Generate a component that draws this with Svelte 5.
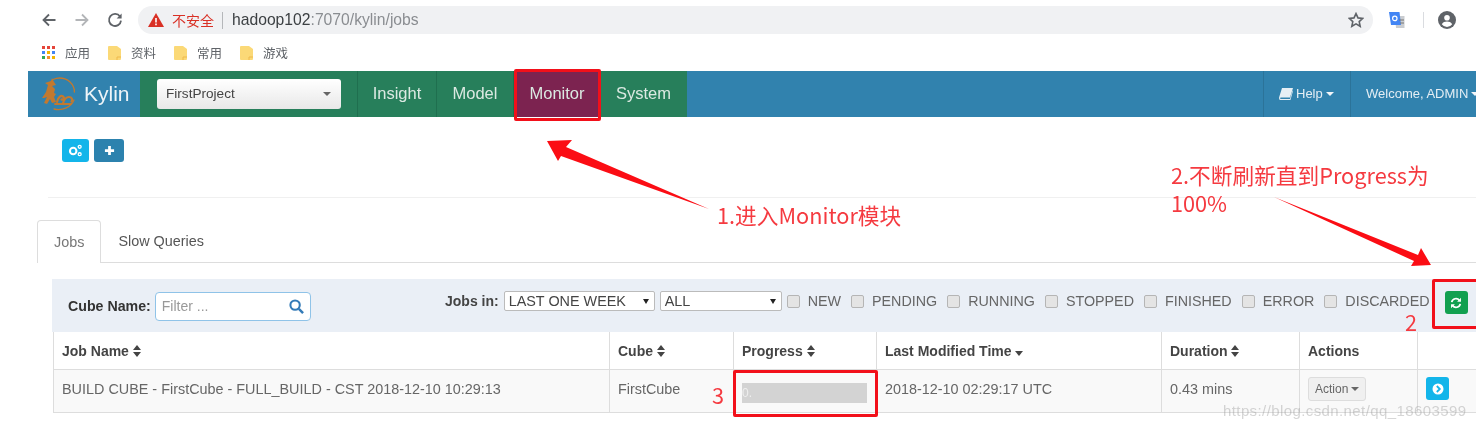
<script>
	const bookmarks = ['资料', '常用', '游戏'];
	const appDots = ['#e5453a', '#e5453a', '#e5453a', '#4285f4', '#f4b400', '#4285f4', '#34a853', '#f4902b', '#f4b400'];
	const navItems = ['Insight', 'Model', 'Monitor', 'System'];
	const statuses = ['NEW', 'PENDING', 'RUNNING', 'STOPPED', 'FINISHED', 'ERROR', 'DISCARDED'];
	const columns = [
		{ label: 'Job Name', width: 556, sort: 'both' },
		{ label: 'Cube', width: 124, sort: 'both' },
		{ label: 'Progress', width: 143, sort: 'both' },
		{ label: 'Last Modified Time', width: 285, sort: 'down' },
		{ label: 'Duration', width: 138, sort: 'both' },
		{ label: 'Actions', width: 118, sort: '' },
		{ label: '', width: 59, sort: '' }
	];
</script>

<div class="screen">
	<div class="browser">
		<div class="url-row">
			<svg class="tool" viewBox="0 0 16 16" width="16" height="16"><path d="M14.5 8H3M8 2.5 2.5 8 8 13.5" fill="none" stroke="#5f6368" stroke-width="1.8" /></svg>
			<svg class="tool" viewBox="0 0 16 16" width="16" height="16"><path d="M1.5 8H13M8 2.5 13.5 8 8 13.5" fill="none" stroke="#b3b5b8" stroke-width="1.8" /></svg>
			<svg class="tool" viewBox="0 0 16 16" width="16" height="16"><path d="M13 4.6A6 6 0 1 0 14 8.6" fill="none" stroke="#5f6368" stroke-width="1.8" /><path d="M14.6 1.6v5h-5z" fill="#5f6368" /></svg>
			<div class="omnibox">
				<svg viewBox="0 0 16 14" width="16" height="14"><path d="M8 0 16 14H0z" fill="#d93025" /><path d="M7.2 5h1.6v4.6H7.2zM7.2 10.6h1.6v1.6H7.2z" fill="#fff" /></svg>
				<span class="insecure">不安全</span>
				<span class="divider"></span>
				<span class="host">hadoop102</span><span class="path">:7070/kylin/jobs</span>
				<svg class="star" viewBox="0 0 16 16" width="16" height="16"><path d="m8 1.6 2 4.3 4.7.5-3.5 3.2 1 4.7L8 11.9l-4.2 2.4 1-4.7-3.5-3.2 4.7-.5z" fill="none" stroke="#5f6368" stroke-width="1.6" /></svg>
			</div>
			<svg class="translate" viewBox="0 0 18 18" width="18" height="18"><path d="M7 5h9.5v12H8z" fill="#c9ccd0" /><path d="M1 1h10.5l1.500 13H3z" fill="#4285f4" /><circle cx="6.800" cy="7.400" r="2.200" fill="none" stroke="#fff" stroke-width="1.200" /><path d="M11 9h5M12 12h4" stroke="#777" stroke-width="1" /></svg>
			<span class="ext-divider"></span>
			<svg class="account" viewBox="0 0 18 18" width="18" height="18"><circle cx="9" cy="9" r="9" fill="#5f6368" /><circle cx="9" cy="6.700" r="2.800" fill="#fff" /><path d="M3.800 13.200c1-2 3.200-2.700 5.200-2.700s4.200.7 5.200 2.700A6.800 6.800 0 0 1 9 16a6.800 6.800 0 0 1-5.200-2.800" fill="#fff" /></svg>
		</div>
		<div class="bookmark-row">
			<div class="bookmark">
				<span class="apps">
					{#each appDots as color}
						<i style:background={color}></i>
					{/each}
				</span>
				<span>应用</span>
			</div>
			{#each bookmarks as name}
				<div class="bookmark">
					<svg viewBox="0 0 13 14" width="13" height="14"><path d="M0 1a1 1 0 0 1 1-1h8l4 3v10a1 1 0 0 1-1 1H1a1 1 0 0 1-1-1z" fill="#fbd977" /><path d="M9 14v-3h4" fill="none" stroke="#eeb94c" /></svg>
					<span>{name}</span>
				</div>
			{/each}
		</div>
	</div>

	<div class="page">
		<nav class="navbar">
			<div class="brand">
				<svg viewBox="0 0 36 36" width="36" height="36">
					<g fill="none" stroke="#c2792f" stroke-linecap="round">
						<path d="M13 3.500C21 0 30 3 33.500 11c1 2.500 1 4 .8 5" stroke-width="1.300" />
						<path d="M34 24c-3 7-11 11-20 9" stroke-width="1.300" />
						<path d="M17 26c1-5 4-7 6-5.500 2 1.500 0 4-1.500 3M23 27c1-3 3-6 6-6 3 0 4 3 2.500 4.500" stroke-width="2.200" />
						<path d="M15 28h16" stroke-width="1.800" />
					</g>
					<path d="M2 22 6 16 8 9l-3-2 6-2 1-3 2 4 2 3-4 1 3 3-1 4 2 1-2 3 2 5-4 1-2-4-3 5-3-1 3-6-3 1z" fill="#c2792f" />
				</svg>
				<span>Kylin</span>
			</div>
			<div class="green">
				<div class="project-slot">
					<div class="project">
						<span>FirstProject</span>
						<i class="caret dark"></i>
					</div>
				</div>
				{#each navItems as item}
					<a href="#top" class="nav-link" class:active={item === 'Monitor'}>{item}</a>
				{/each}
			</div>
			<div class="nav-right">
				<a href="#top" class="help">
					<svg viewBox="0 0 14 12" width="14" height="12"><path d="M3 0h11l-3 9.500H1.500a1.200 1.200 0 0 0 0 1.500H11l2.500-8.500.5.600-2.700 9.400H1.500C.3 12-.3 10.500.2 9z" fill="#e6eff5" /></svg>
					Help <i class="caret light"></i>
				</a>
				<a href="#top" class="welcome">Welcome, ADMIN <i class="caret light"></i></a>
			</div>
		</nav>

		<div class="actions-bar">
			<button class="square info" aria-label="settings">
				<svg viewBox="0 0 16 14" width="15" height="13">
					<circle cx="5.500" cy="7.500" r="3.500" fill="none" stroke="#fff" stroke-width="2.200" />
					<circle cx="12.500" cy="3" r="1.600" fill="none" stroke="#fff" stroke-width="1.400" />
					<circle cx="12.500" cy="11" r="1.600" fill="none" stroke="#fff" stroke-width="1.400" />
				</svg>
			</button>
			<button class="square primary" aria-label="add">
				<svg viewBox="0 0 12 12" width="11" height="11"><path d="M6 1v10M1 6h10" stroke="#fff" stroke-width="3" /></svg>
			</button>
		</div>
		<div class="rule"></div>

		<div class="tabs">
			<span class="tab on">Jobs</span>
			<span class="tab">Slow Queries</span>
		</div>

		<section class="jobs">
			<div class="filters">
				<div class="cube-filter">
					<b>Cube Name:</b>
					<div class="search">
						<span>Filter ...</span>
						<svg viewBox="0 0 16 16" width="15" height="15"><circle cx="6.500" cy="6.500" r="5" fill="none" stroke="#337ab7" stroke-width="2.200" /><path d="m10.500 10.500 4.500 4.500" stroke="#337ab7" stroke-width="2.600" /></svg>
					</div>
				</div>
				<div class="job-filter">
					<b>Jobs in:</b>
					<div class="select week">LAST ONE WEEK<i class="caret black"></i></div>
					<div class="select all">ALL<i class="caret black"></i></div>
					{#each statuses as status}
						<span class="status"><i class="check"></i>{status}</span>
					{/each}
				</div>
				<button class="square success refresh" aria-label="refresh">
					<svg viewBox="0 0 14 14" width="12" height="12"><path d="M2 6a5 5 0 0 1 9-2M12 8a5 5 0 0 1-9 2" fill="none" stroke="#fff" stroke-width="2" /><path d="M12.800 1v4.500H8.300zM1.200 13V8.500h4.500z" fill="#fff" /></svg>
				</button>
			</div>

			<table>
				<colgroup>
					{#each columns as col}
						<col style:width="{col.width}px" />
					{/each}
				</colgroup>
				<thead>
					<tr>
						{#each columns as col}
							<th>
								{col.label}
								{#if col.sort === 'both'}
									<svg class="sort" viewBox="0 0 8 12" width="8" height="12"><path d="M4 0l4 5H0zM4 12 0 7h8z" fill="#444" /></svg>
								{:else if col.sort === 'down'}
									<svg class="sort" viewBox="0 0 8 12" width="8" height="12"><path d="M4 11 0 6h8z" fill="#444" /></svg>
								{/if}
							</th>
						{/each}
					</tr>
				</thead>
				<tbody>
					<tr>
						<td>BUILD CUBE - FirstCube - FULL_BUILD - CST 2018-12-10 10:29:13</td>
						<td>FirstCube</td>
						<td><div class="progress">0.</div></td>
						<td>2018-12-10 02:29:17 UTC</td>
						<td>0.43 mins</td>
						<td><span class="action">Action <i class="caret dark"></i></span></td>
						<td>
							<button class="square info go" aria-label="details">
								<svg viewBox="0 0 12 12" width="12" height="12"><circle cx="6" cy="6" r="5.500" fill="#fff" /><path d="m4.800 3 3 3-3 3" fill="none" stroke="#13b5ea" stroke-width="1.800" /></svg>
							</button>
						</td>
					</tr>
				</tbody>
			</table>
		</section>
	</div>

	<!-- annotations pasted over the screenshot -->
	<svg class="arrows" viewBox="0 0 1476 430" width="1476" height="430">
		<path d="M547 141 572 140 566 147 709 209 561 156 558 161z" fill="#fb0d14" />
		<path d="M1274 197 1418 255 1421 248 1431 265 1411 266 1414 261z" fill="#fb0d14" />
	</svg>
	<span class="mark mark-monitor"></span>
	<span class="mark mark-refresh"></span>
	<span class="mark mark-progress"></span>
	<span class="note note-1">1.进入Monitor模块</span>
	<span class="note note-2">2.不断刷新直到Progress为<br />100%</span>
	<span class="note num-2">2</span>
	<span class="note num-3">3</span>
	<span class="watermark">https://blog.csdn.net/qq_18603599</span>
</div>

<style>
	:global(body) {
		margin: 0;
		background: #fff;
	}

	.screen {
		position: relative;
		width: 1476px;
		height: 430px;
		overflow: hidden;
		font-family: 'Liberation Sans', 'Noto Sans CJK SC', sans-serif;
		font-size: 14.4px;
		color: #555;
		background: #fff;
		filter: blur(0.35px);
	}

	/* browser chrome */
	.browser {
		height: 71px;
	}

	.url-row {
		display: flex;
		align-items: center;
		height: 28px;
		padding: 6px 0 0 41px;
	}

	.tool {
		margin-right: 17px;
	}

	.tool:nth-child(3) {
		margin-right: 15px;
	}

	.omnibox {
		display: flex;
		align-items: center;
		width: 1225px;
		height: 28px;
		padding-left: 10px;
		border-radius: 14px;
		background: #f0f1f3;
		font-size: 15.7px;
	}

	.insecure {
		margin-left: 8px;
		color: #d93025;
		font-size: 14px;
	}

	.divider {
		width: 1px;
		height: 17px;
		margin: 0 9px 0 8px;
		background: #b5b7ba;
	}

	.host {
		color: #3c4043;
	}

	.path {
		color: #8a8d91;
	}

	.star {
		margin-left: auto;
		margin-right: 9px;
	}

	.translate {
		margin-left: 15px;
	}

	.ext-divider {
		width: 1px;
		height: 16px;
		margin: 0 14px 0 17px;
		background: #dadce0;
	}

	.bookmark-row {
		display: flex;
		align-items: center;
		height: 37px;
		padding-left: 42px;
	}

	.bookmark {
		display: flex;
		align-items: center;
		gap: 10px;
		width: 66px;
		font-size: 12.5px;
		color: #5f6368;
	}

	.apps {
		display: grid;
		grid-template-columns: repeat(3, 3px);
		gap: 2px;
	}

	.apps i {
		height: 3px;
	}

	/* app */
	.page {
		margin-left: 28px;
	}

	.navbar {
		display: flex;
		height: 46px;
		background: #3182ae;
		color: #fff;
	}

	.brand {
		display: flex;
		align-items: center;
		gap: 8px;
		width: 112px;
		padding: 0 0 1px 12px;
		box-sizing: border-box;
		font-size: 21px;
		color: #eef4f8;
	}

	.green {
		display: flex;
		background: #277f5b;
	}

	.project-slot {
		display: flex;
		align-items: center;
		width: 218px;
		padding-left: 17px;
		box-sizing: border-box;
		border-right: 1px solid #1f6f4f;
	}

	.project {
		display: flex;
		align-items: center;
		justify-content: space-between;
		width: 184px;
		height: 30px;
		padding: 0 10px 1px 9px;
		box-sizing: border-box;
		border-radius: 3px;
		background: linear-gradient(#fff, #e8e8e8);
		color: #444;
		font-size: 13.6px;
	}

	.nav-link {
		display: flex;
		align-items: center;
		justify-content: center;
		width: 78px;
		padding-bottom: 2px;
		box-sizing: content-box;
		border-right: 1px solid #1f6f4f;
		color: #dbe9e2;
		font-size: 16.5px;
		text-decoration: none;
	}

	.nav-link:nth-child(3) {
		width: 76px;
	}

	.nav-link.active {
		width: 86px;
		box-sizing: border-box;
		border: 0;
		background: #7c2350;
	}

	.nav-link:last-child {
		width: 87px;
		border: 0;
	}

	.nav-right {
		display: flex;
		margin-left: auto;
		font-size: 13px;
	}

	.nav-right a {
		display: flex;
		align-items: center;
		gap: 3px;
		padding-bottom: 1px;
		box-sizing: border-box;
		border-left: 1px solid #2b7399;
		color: #e4eef4;
		text-decoration: none;
		white-space: nowrap;
	}

	.help {
		width: 87px;
		padding-left: 15px;
	}

	.welcome {
		width: 126px;
		padding-left: 15px;
	}

	.caret {
		display: inline-block;
		width: 0;
		height: 0;
		border-left: 4px solid transparent;
		border-right: 4px solid transparent;
		border-top: 4px solid currentColor;
	}

	.caret.dark {
		color: #666;
	}

	.caret.light {
		color: #f2f6f9;
	}

	.caret.black {
		position: absolute;
		top: 7px;
		right: 5px;
		border-left-width: 3px;
		border-right-width: 3px;
		border-top-width: 5px;
		color: #222;
	}

	.actions-bar {
		display: flex;
		gap: 5px;
		height: 23px;
		padding: 22px 0 0 34px;
	}

	.square {
		display: flex;
		align-items: center;
		justify-content: center;
		padding: 0;
		border: 0;
		border-radius: 3px;
	}

	.square.info {
		width: 27px;
		background: #13b5ea;
	}

	.square.primary {
		width: 30px;
		background: #2c82ae;
	}

	.rule {
		height: 1px;
		margin: 35px 0 0 20px;
		background: #f0f0f0;
	}

	.tabs {
		display: flex;
		height: 42px;
		margin: 22px 0 0 9px;
		border-bottom: 1px solid #ddd;
	}

	.tab {
		display: flex;
		align-items: center;
		padding: 0 17px;
		color: #555;
	}

	.tab.on {
		height: 43px;
		padding: 0 16px;
		box-sizing: border-box;
		border: 1px solid #ddd;
		border-bottom: 0;
		border-radius: 4px 4px 0 0;
		background: #fff;
		color: #777;
	}

	.jobs {
		margin: 16px 0 0 24px;
	}

	.filters {
		display: flex;
		height: 53px;
		background: #eaeff6;
	}

	.cube-filter {
		display: flex;
		align-items: center;
		gap: 4px;
		width: 393px;
		padding: 1px 0 0 16px;
		box-sizing: border-box;
		color: #333;
		font-size: 14.2px;
	}

	.search {
		display: flex;
		align-items: center;
		justify-content: space-between;
		width: 156px;
		height: 29px;
		padding: 0 6px;
		box-sizing: border-box;
		border: 1px solid #8fc3e8;
		border-radius: 4px;
		background: #fff;
		color: #999;
		font-size: 14px;
	}

	.job-filter {
		display: flex;
		align-items: center;
		height: 44px;
		white-space: nowrap;
	}

	.job-filter b {
		margin-right: 5px;
		color: #444;
		font-size: 14px;
	}

	.select {
		position: relative;
		height: 20px;
		padding-left: 4px;
		box-sizing: border-box;
		border: 1px solid #bbb;
		border-radius: 2px;
		background: #fff;
		color: #444;
		line-height: 18px;
	}

	.select.week {
		width: 151px;
		margin-right: 5px;
	}

	.select.all {
		width: 122px;
		margin-right: 5px;
	}

	.status {
		display: flex;
		align-items: center;
		margin-right: 10px;
		color: #666;
		font-size: 14.3px;
	}

	.status:last-child {
		margin-right: 0;
	}

	.check {
		width: 13px;
		height: 13px;
		margin-right: 8px;
		box-sizing: border-box;
		border: 1px solid #b5b5b5;
		border-radius: 2px;
		background: #e4e4e4;
	}

	.refresh {
		width: 23px;
		height: 23px;
		margin: 12px 0 0 15px;
		background: #12a050;
	}

	table {
		width: 1423px;
		border-collapse: collapse;
		table-layout: fixed;
		margin-left: 1px;
	}

	th,
	td {
		padding: 0 8px;
		border: 1px solid #ddd;
		text-align: left;
		white-space: nowrap;
	}

	th {
		height: 37px;
		color: #444;
		font-size: 14px;
		border-top: 0;
	}

	td {
		height: 43px;
		padding-bottom: 5px;
		box-sizing: border-box;
		background: #f9f9f9;
		color: #666;
	}

	.sort {
		vertical-align: -1px;
	}

	.progress {
		width: 125px;
		height: 20px;
		margin-top: 9px;
		background: #d3d3d3;
		color: #eee;
		font-size: 12px;
		line-height: 20px;
	}

	.action {
		display: inline-flex;
		align-items: center;
		gap: 3px;
		height: 22px;
		padding: 0 6px;
		border: 1px solid #ddd;
		border-radius: 3px;
		background: #f0f0f0;
		font-size: 12px;
	}

	.square.go {
		width: 23px;
		height: 23px;
	}

	/* annotations */
	.arrows {
		position: absolute;
		inset: 0;
		pointer-events: none;
	}

	.mark {
		position: absolute;
		box-sizing: border-box;
		border: 3px solid #f2101a;
		border-radius: 2px;
	}

	.mark-monitor {
		left: 514px;
		top: 69px;
		width: 87px;
		height: 52px;
	}

	.mark-refresh {
		left: 1432px;
		top: 279px;
		width: 50px;
		height: 50px;
	}

	.mark-progress {
		left: 733px;
		top: 370px;
		width: 145px;
		height: 47px;
	}

	.note {
		position: absolute;
		color: #f53a40;
		font-family: 'Noto Sans CJK SC', sans-serif;
		font-size: 21.7px;
		line-height: 28px;
		white-space: nowrap;
	}

	.note-1 {
		left: 717px;
		top: 201px;
	}

	.note-2 {
		left: 1171px;
		top: 161px;
	}

	.num-2 {
		left: 1405px;
		top: 312px;
		line-height: 20px;
	}

	.num-3 {
		left: 712px;
		top: 381px;
	}

	.watermark {
		position: absolute;
		left: 1223px;
		top: 402px;
		color: rgba(150, 150, 150, 0.4);
		font-size: 15px;
		letter-spacing: 0.4px;
		white-space: nowrap;
	}
</style>
